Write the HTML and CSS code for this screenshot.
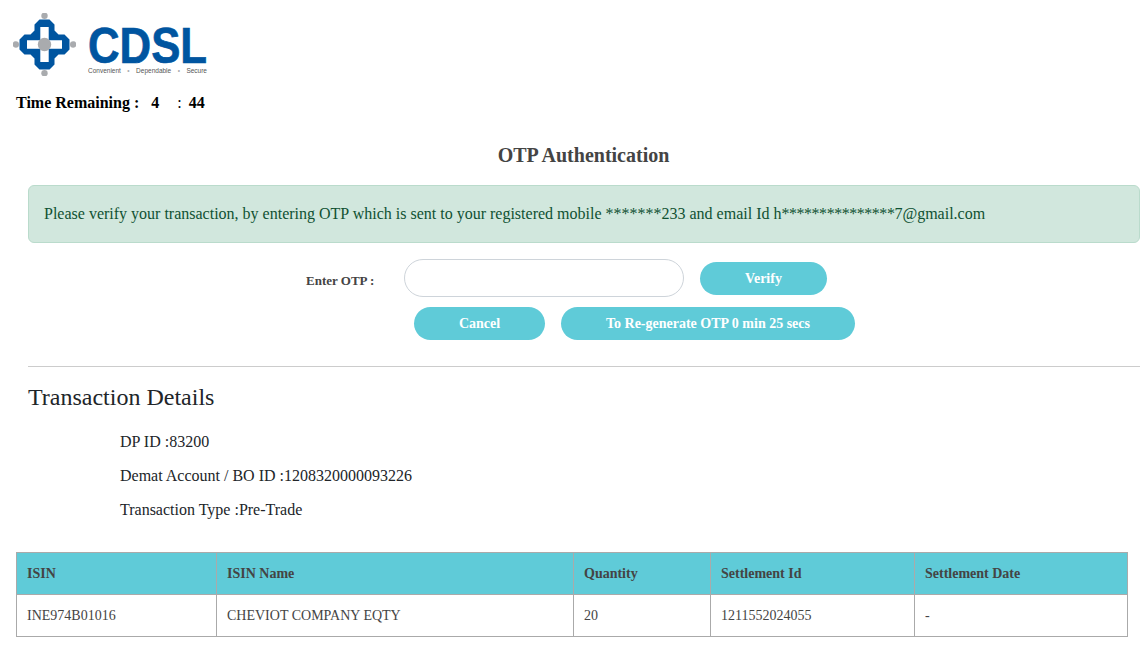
FILE: index.html
```html
<!DOCTYPE html>
<html lang="en">
<head>
  <meta charset="UTF-8" />
  <title>OTP Authentication | CDSL</title>
  <link rel="stylesheet" href="styles.css">
</head>
<body>
  <div class="logo">
    <svg class="logo-icon" width="63" height="63" viewBox="-31.500 -31.500 63 63">
      <path fill="#0055a0" d="M-5-25H5L10-20V-14L14-10H20L25-5V5L20 10H14L10 14V20L5 25H-5L-10 20V14L-14 10H-20L-25 5V-5L-20-10H-14L-10-14V-20Z"/>
      <path fill="#fff" d="M-4.200-17.500H4.200V-4.200H17.500V4.200H4.200V17.500H-4.200V4.200H-17.500V-4.200H-4.200Z"/>
      <circle r="6.700" fill="#a9abae"/>
      <circle cy="-28.700" r="3.200" fill="#a9abae"/>
      <circle cy="28.700" r="3.200" fill="#a9abae"/>
      <circle cx="-28.700" r="3.200" fill="#a9abae"/>
      <circle cx="28.700" r="3.200" fill="#a9abae"/>
    </svg>
    <div class="logo-text">
      <div class="logo-name">CDSL</div>
      <div class="logo-tag">
        <span>Convenient</span>
        <span class="logo-dot">•</span>
        <span>Dependable</span>
        <span class="logo-dot">•</span>
        <span>Secure</span>
      </div>
    </div>
  </div>

  <div class="timer">
    <span class="timer-label">Time Remaining :</span>
    <span class="timer-min">4</span>
    <span class="timer-sep">:</span>
    <span>44</span>
  </div>

  <h2 class="page-title">OTP Authentication</h2>

  <div class="alert">Please verify your transaction, by entering OTP which is sent to your registered mobile *******233 and email Id h<span class="mask">***************</span>7@gmail.com</div>

  <div class="otp-row">
    <label class="otp-label" for="otp">Enter OTP :</label>
    <input class="otp-input" id="otp" type="text" />
    <button class="btn btn-verify">Verify</button>
  </div>
  <div class="btn-row">
    <button class="btn btn-cancel">Cancel</button>
    <button class="btn btn-regen">To Re-generate OTP 0 min 25 secs</button>
  </div>

  <hr class="divider" />

  <h3 class="section-title">Transaction Details</h3>
  <div class="details">
    <p>DP ID :83200</p>
    <p>Demat Account / BO ID :1208320000093226</p>
    <p>Transaction Type :Pre-Trade</p>
  </div>

  <table class="txn-table">
    <thead>
      <tr>
        <th class="col-isin">ISIN</th>
        <th class="col-name">ISIN Name</th>
        <th class="col-qty">Quantity</th>
        <th class="col-sid">Settlement Id</th>
        <th>Settlement Date</th>
      </tr>
    </thead>
    <tbody>
      <tr>
        <td>INE974B01016</td>
        <td>CHEVIOT COMPANY EQTY</td>
        <td>20</td>
        <td>1211552024055</td>
        <td>-</td>
      </tr>
    </tbody>
  </table>
</body>
</html>
```

FILE: styles.css
```css
body {
  margin: 0;
  font-family: "Liberation Serif", "Times New Roman", serif;
  font-size: 16px;
  color: #212529;
  background: #fff;
}

.logo {
  display: flex;
  height: 67px;
  padding: 13px 0 0 13px;
}

.logo-icon {
  display: block;
  flex: none;
}

.logo-text {
  width: 119px;
  margin: 14px 0 0 12px;
}

.logo-name {
  height: 38px;
  font-family: "Liberation Sans", Arial, sans-serif;
  font-size: 50px;
  font-weight: bold;
  line-height: 38px;
  color: #0055a0;
  -webkit-text-stroke: 0.7px #0055a0;
  transform: scaleX(0.875);
  transform-origin: left;
}

.logo-tag {
  display: flex;
  justify-content: space-between;
  margin-top: 2px;
  font-family: "Liberation Sans", Arial, sans-serif;
  font-size: 6.500px;
  line-height: 8px;
  color: #555;
}

.logo-dot {
  color: #a9abae;
}

.timer {
  display: flex;
  padding-left: 16px;
  margin-top: 14px;
  font-weight: bold;
  line-height: 18px;
  color: #000;
}

.timer-min {
  margin-left: 12px;
}

.timer-sep {
  margin: 0 7px 0 18px;
  font-weight: normal;
}

.page-title {
  margin: 31px 0 0;
  padding-left: 23px;
  text-align: center;
  font-size: 20px;
  line-height: 24px;
  color: #444;
}

.alert {
  box-sizing: border-box;
  width: 1112px;
  height: 58px;
  margin: 18px 0 0 28px;
  padding: 0 15px;
  line-height: 56px;
  color: #0f5132;
  background: #d1e7dd;
  border: 1px solid #badbcc;
  border-radius: 6px;
}

.mask {
  letter-spacing: -0.47px;
}

.otp-row {
  display: flex;
  align-items: center;
  margin: 16px 0 0 306px;
}

.otp-label {
  width: 98px;
  padding-top: 6px;
  font-size: 13px;
  font-weight: bold;
  color: #444;
}

.otp-input {
  box-sizing: border-box;
  width: 280px;
  height: 38px;
  background: #fff;
  border: 1px solid #ced4da;
  border-radius: 19px;
  outline: none;
}

.btn {
  height: 33px;
  padding: 0;
  font-family: inherit;
  font-size: 14px;
  font-weight: bold;
  color: #fff;
  background: #5fcbd8;
  border: none;
  border-radius: 17px;
}

.btn-verify {
  width: 127px;
  margin-left: 16px;
  padding-top: 2px;
}

.btn-row {
  display: flex;
  gap: 16px;
  margin: 10px 0 0 414px;
}

.btn-cancel {
  width: 131px;
}

.btn-regen {
  width: 294px;
}

.divider {
  width: 1112px;
  margin: 26px 0 0 28px;
  border: none;
  border-top: 1px solid #ccc;
}

.section-title {
  margin: 16px 0 0 28px;
  font-size: 24px;
  font-weight: normal;
  line-height: 29px;
}

.details {
  margin: 21px 0 0 120px;
}

.details p {
  margin: 0 0 16px;
  line-height: 18px;
}

.txn-table {
  width: 1112px;
  margin: 33px 0 0 16px;
  table-layout: fixed;
  border-collapse: collapse;
  font-size: 14px;
  color: #444;
}

.txn-table th,
.txn-table td {
  box-sizing: border-box;
  height: 42px;
  padding: 0 10px;
  text-align: left;
  border: 1px solid #aaa;
}

.txn-table th {
  background: #5fcbd8;
}

.col-isin {
  width: 200px;
}

.col-name {
  width: 357px;
}

.col-qty {
  width: 137px;
}

.col-sid {
  width: 204px;
}
```
